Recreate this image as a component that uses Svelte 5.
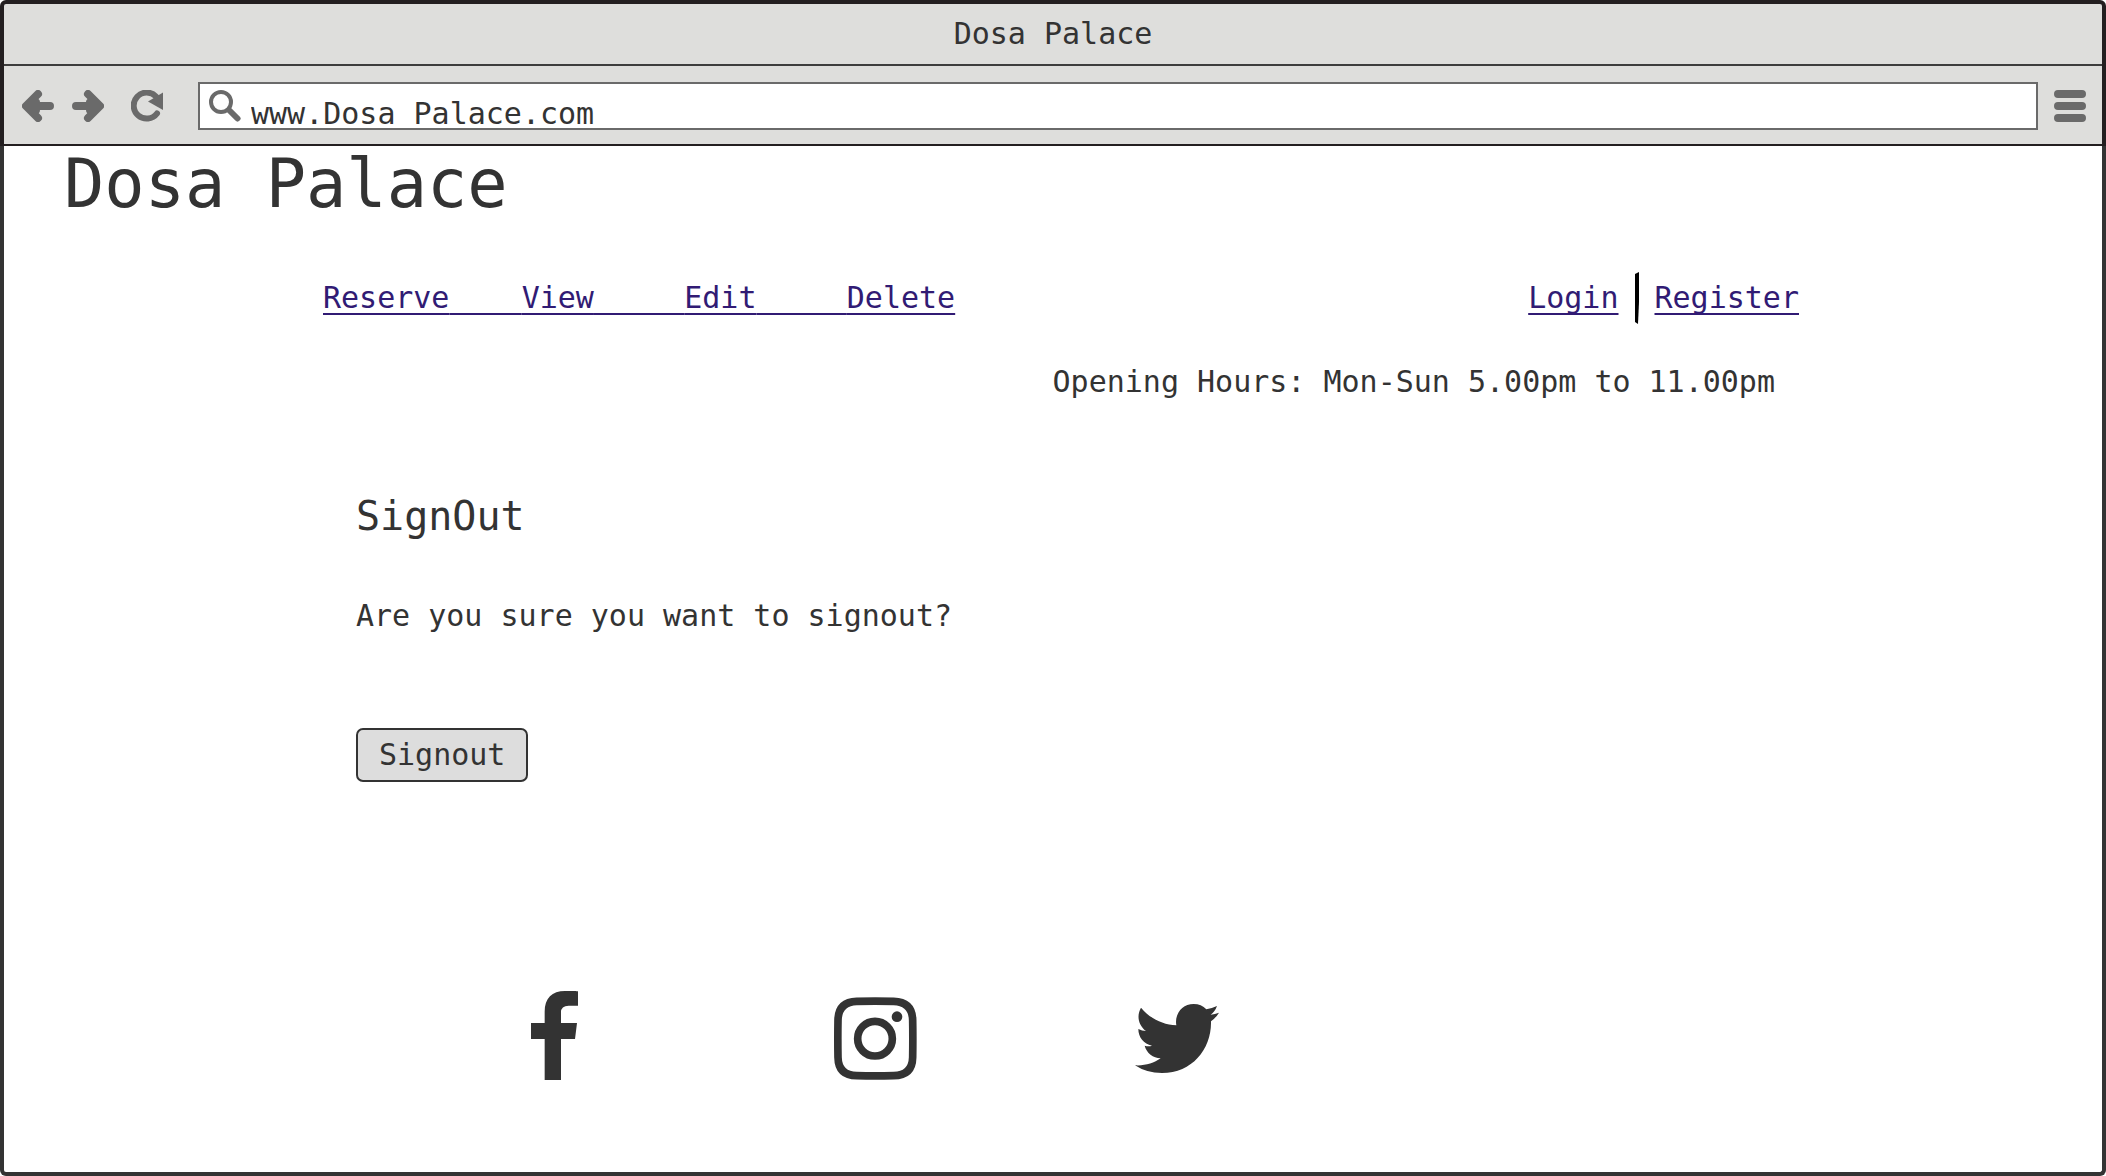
<script>
  let address = $state('www.Dosa Palace.com');
</script>

<div class="window">
  <header class="chrome">
    <div class="title">Dosa Palace</div>
    <div class="toolbar">
      <button class="tool" aria-label="Back">
        <svg viewBox="0 0 32 32"><path class="arrow" d="M28 16H6M16 4L4 16L16 28M10 16L14 12V20Z" /></svg>
      </button>
      <button class="tool forward" aria-label="Forward">
        <svg viewBox="0 0 32 32"><path class="arrow" d="M4 16H26M16 4L28 16L16 28M22 16L18 12V20Z" /></svg>
      </button>
      <button class="tool reload" aria-label="Reload">
        <svg viewBox="0 0 32 32">
          <path class="ring" d="M26 23.500A13 13 0 1 1 25 6.500" />
          <path class="solid" d="M32 2.500V20L17 11.500Z" />
        </svg>
      </button>
      <div class="address">
        <svg viewBox="0 0 32 32" aria-hidden="true">
          <circle class="lens" cx="12" cy="12" r="10" />
          <path class="handle" d="M20.500 20.500L28.500 28.500" />
        </svg>
        <input type="text" aria-label="Address" bind:value={address} />
      </div>
      <button class="tool" aria-label="Menu">
        <svg viewBox="0 0 32 32"><path class="arrow" d="M4 4H28M4 16H28M4 28H28" /></svg>
      </button>
    </div>
  </header>

  <main>
    <h1>Dosa Palace</h1>

    <div class="links">
      <nav class="underlined" aria-label="Reservations"><a href="#reserve">Reserve</a>{'    '}<a href="#view">View</a>{'     '}<a href="#edit">Edit</a>{'     '}<a href="#delete">Delete</a></nav>
      <nav class="account" aria-label="Account">
        <a class="underlined" href="#login">Login</a>
        <svg class="divider" viewBox="0 0 4 52" aria-hidden="true"><path d="M0 2L4 0V30L3 52L0 50Z" /></svg>
        <a class="underlined" href="#register">Register</a>
      </nav>
    </div>

    <p class="hours">Opening Hours: Mon-Sun 5.00pm to 11.00pm</p>

    <section>
      <h2>SignOut</h2>
      <p>Are you sure you want to signout?</p>
      <button class="signout">Signout</button>
    </section>

    <footer>
      <a class="facebook" href="#facebook" aria-label="Facebook">
        <svg viewBox="63 63 141 267"><path d="M104 330V207H63V159H104V125C104 85 126 63 165 63Q185 61 204 64V107H176Q153 107 153 127V159H201L195 207H153V330Z" /></svg>
      </a>
      <a class="instagram" href="#instagram" aria-label="Instagram">
        <svg viewBox="72 63 249 267">
          <path class="outline" d="M140 94Q195 93 251 94Q307 96 308 150Q309 206 308 262Q307 316 251 317Q195 318 140 317Q85 316 84 262Q83 206 84 150Q85 96 140 94Z" />
          <circle class="outline" cx="195" cy="206" r="52" />
          <circle cx="261" cy="140" r="16" />
        </svg>
      </a>
      <a class="twitter" href="#twitter" aria-label="Twitter">
        <svg viewBox="46 33 252 267"><path d="M46 256C75 258 102 250 123 235C100 234 81 219 75 197Q87 200 97 197C72 191 56 172 56 147Q67 153 79 153C56 136 50 107 64 83C91 115 128 134 170 136C164 103 187 72 222 72Q245 72 260 88Q277 85 292 78Q286 95 273 104Q286 102 298 98Q288 114 274 124C276 205 219 279 127 279Q80 279 46 256Z" /></svg>
      </a>
    </footer>
  </main>
</div>

<style>
  .window {
    display: flex;
    flex-direction: column;
    box-sizing: border-box;
    min-height: 100vh;
    background: #fff;
    color: #333;
    font-family: 'DejaVu Sans Mono', monospace;
    font-size: 30px;
    line-height: 36px;
  }

  .window * {
    box-sizing: border-box;
  }

  .chrome {
    border: 4px solid #231f20;
    border-bottom-width: 2px;
    border-radius: 6px 6px 0 0;
    background: #dededc;
  }

  .title {
    padding: 12px 0;
    border-bottom: 2px solid #3d3d3d;
    text-align: center;
  }

  .toolbar {
    display: flex;
    align-items: center;
    height: 78px;
    padding: 2px 16px 0 18px;
  }

  .tool {
    flex: none;
    width: 32px;
    height: 32px;
    padding: 0;
    border: 0;
    background: none;
  }

  svg {
    display: block;
    width: 100%;
    height: 100%;
  }

  .forward {
    margin-left: 18px;
  }

  .reload {
    margin-left: 27px;
  }

  .arrow,
  .ring,
  .lens,
  .handle {
    fill: none;
    stroke: #6a6a6a;
    stroke-linecap: round;
    stroke-linejoin: round;
  }

  .arrow {
    stroke-width: 8;
  }

  .ring,
  .handle {
    stroke-width: 6;
  }

  .lens {
    stroke-width: 4;
  }

  .solid {
    fill: #6a6a6a;
  }

  .address {
    display: flex;
    flex: 1;
    height: 48px;
    margin: 0 16px 0 35px;
    padding-left: 9px;
    border: 2px solid #6a6a6a;
    background: #fff;
  }

  .address svg {
    flex: none;
    width: 32px;
    height: 32px;
    margin-top: 6px;
  }

  .address input {
    flex: 1;
    min-width: 0;
    padding: 15px 10px 0;
    border: 0;
    outline: 0;
    background: none;
    color: inherit;
    font: inherit;
  }

  main {
    flex: 1;
    border: 4px solid #333;
    border-top: 0;
    border-radius: 0 0 6px 6px;
    padding-bottom: 40px;
  }

  h1,
  h2,
  p {
    margin: 0;
    font-weight: 400;
  }

  h1 {
    padding-left: 60px;
    font-size: 67px;
    line-height: 76px;
  }

  .links {
    display: flex;
    align-items: center;
    justify-content: space-between;
    margin-top: 50px;
    padding: 0 303px 0 319px;
    color: #311b74;
    white-space: pre;
  }

  .links a {
    color: inherit;
  }

  .underlined {
    text-decoration: underline 2px;
    text-decoration-skip-ink: none;
    text-underline-offset: 5px;
  }

  nav.underlined a {
    text-decoration: none;
  }

  .account {
    display: flex;
    align-items: center;
    gap: 16px;
  }

  .divider {
    width: 4px;
    height: 52px;
    fill: #000;
  }

  .hours {
    margin-top: 40px;
    padding-right: 327px;
    text-align: right;
  }

  section {
    margin-top: 92px;
    padding-left: 352px;
  }

  h2 {
    font-size: 40px;
    line-height: 48px;
  }

  section p {
    margin-top: 58px;
  }

  .signout {
    display: block;
    margin-top: 94px;
    padding: 7px 21px;
    border: 2px solid #333;
    border-radius: 7px;
    background: #ddd;
    color: inherit;
    font: inherit;
  }

  footer {
    display: flex;
    margin-top: 209px;
    padding-left: 527px;
  }

  footer a {
    height: 89px;
    fill: #333;
  }

  .facebook {
    width: 47px;
  }

  .instagram {
    width: 83px;
    margin-left: 256px;
  }

  .twitter {
    width: 84px;
    margin-left: 218px;
  }

  .outline {
    fill: none;
    stroke: #333;
    stroke-width: 23;
  }
</style>
